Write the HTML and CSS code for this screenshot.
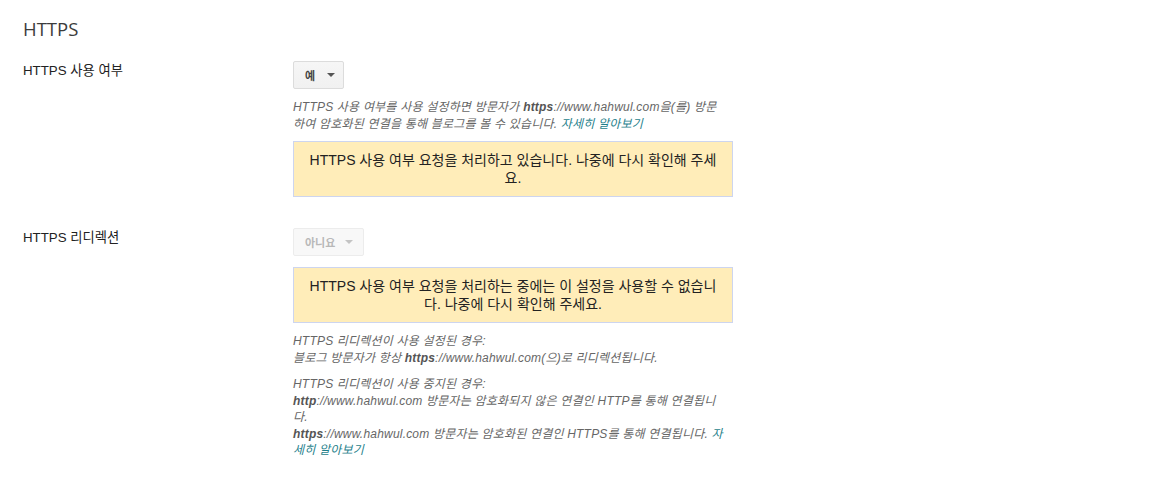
FILE: index.html
```html
<!DOCTYPE html>
<html lang="ko">
  <head>
    <meta charset="UTF-8" />
    <meta name="viewport" content="width=device-width, initial-scale=1.0" />
    <title>HTTPS</title>
    <link rel="stylesheet" href="styles.css">
  </head>
  <body>
    <div class="page">
      <h2 class="title">HTTPS</h2>

      <div class="row">
        <div class="label">HTTPS 사용 여부</div>
        <div class="control">
          <div class="select">예<span class="arrow"></span></div>
          <p class="help">HTTPS 사용 여부를 사용 설정하면 방문자가 <b>https</b>://www.hahwul.com을(를) 방문<br>하여 암호화된 연결을 통해 블로그를 볼 수 있습니다. <a href="#">자세히 알아보기</a></p>
          <div class="notice">HTTPS 사용 여부 요청을 처리하고 있습니다. 나중에 다시 확인해 주세<br>요.</div>
        </div>
      </div>

      <div class="row">
        <div class="label">HTTPS 리디렉션</div>
        <div class="control">
          <div class="select disabled">아니요<span class="arrow"></span></div>
          <div class="notice">HTTPS 사용 여부 요청을 처리하는 중에는 이 설정을 사용할 수 없습니<br>다. 나중에 다시 확인해 주세요.</div>
          <p class="help">HTTPS 리디렉션이 사용 설정된 경우:<br>블로그 방문자가 항상 <b>https</b>://www.hahwul.com(으)로 리디렉션됩니다.</p>
          <p class="help">HTTPS 리디렉션이 사용 중지된 경우:<br><b>http</b>://www.hahwul.com 방문자는 암호화되지 않은 연결인 HTTP를 통해 연결됩니<br>다.<br><b>https</b>://www.hahwul.com 방문자는 암호화된 연결인 HTTPS를 통해 연결됩니다. <a href="#">자<br>세히 알아보기</a></p>
        </div>
      </div>
    </div>
  </body>
</html>
```

FILE: styles.css
```css
body {
  margin: 0;
  background: #fff;
  font-family: Arial, "Liberation Sans", "Noto Sans CJK KR", sans-serif;
  color: #222;
}

.page {
  padding: 16px 0 0 23px;
}

.title {
  margin: 0 0 19px;
  font-family: "Open Sans", "Noto Sans CJK KR", sans-serif;
  font-weight: 400;
  font-size: 18.5px;
  line-height: 26px;
  color: #3c3c3c;
}

.row {
  display: flex;
  margin-bottom: 31px;
}

.label {
  width: 270px;
  flex: none;
  font-size: 13.3px;
  line-height: 17px;
  padding-top: 1px;
  color: #222;
}

.control {
  width: 440px;
}

.select {
  display: inline-flex;
  align-items: center;
  box-sizing: border-box;
  height: 28px;
  padding: 0 8px 0 11px;
  border: 1px solid #dcdcdc;
  border-radius: 2px;
  background: linear-gradient(#f6f6f6, #f1f1f1);
  font-size: 11px;
  font-weight: bold;
  color: #444;
}

.select .arrow {
  margin-left: 12px;
  width: 0;
  height: 0;
  border-left: 4px solid transparent;
  border-right: 4px solid transparent;
  border-top: 4px solid #555;
}

.select.disabled {
  border-color: #ececec;
  background: #f8f8f8;
  color: #b8b8b8;
  padding: 0 10px 0 11px;
}

.select.disabled .arrow {
  margin-left: 10px;
  border-top-color: #c4c4c4;
}

.help {
  width: 450px;
  margin: 10px 0 0;
  font-size: 12px;
  line-height: 16.5px;
  letter-spacing: 0.2px;
  font-style: italic;
  color: #666;
}

.help b {
  color: #555;
}

.help a {
  color: #1f7f8c;
  text-decoration: none;
}

.notice {
  margin-top: 9px;
  box-sizing: border-box;
  padding: 9px 12px;
  border: 1px solid #cdd5ef;
  background: #ffedb9;
  font-size: 14px;
  line-height: 18px;
  text-align: center;
  color: #222;
}

.select + .notice {
  margin-top: 11px;
}
```
